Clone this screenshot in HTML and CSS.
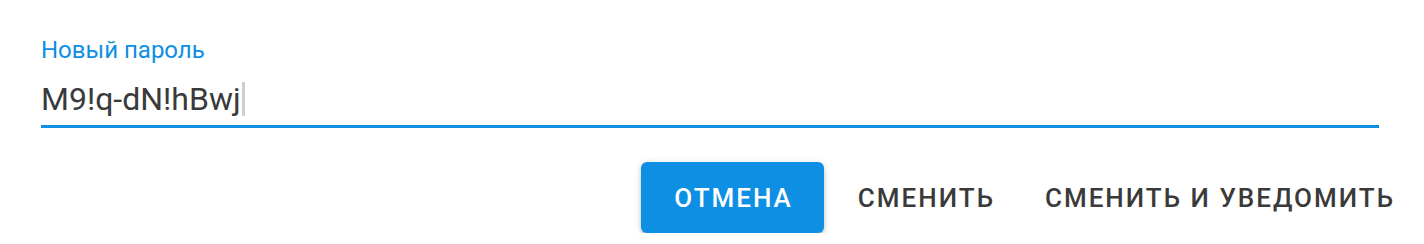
FILE: index.html
```html
<!DOCTYPE html>
<html lang="ru">
<head>
<meta charset="utf-8">
<link rel="stylesheet" href="styles.css">
</head>
<body>
<div class="dialog">
  <div class="field">
    <label class="field-label">Новый пароль</label>
    <div class="field-input"><span class="value">M9!q-dN!hBwj</span><span class="caret"></span></div>
  </div>
  <div class="actions">
    <button class="btn btn-primary">Отмена</button>
    <button class="btn btn-text">Сменить</button>
    <button class="btn btn-text">Сменить и уведомить</button>
  </div>
</div>
</body>
</html>
```
FILE: styles.css
```css
html, body {
  margin: 0;
  padding: 0;
  background: #ffffff;
}
body {
  font-family: Roboto, "Noto Sans", sans-serif;
}
.dialog {
  padding: 36px 13px 0 41px;
}
.field {
  margin-right: 32px;
}
.field-label {
  display: block;
  font-size: 24px;
  line-height: 28px;
  color: #0d8fe3;
}
.field-input {
  display: flex;
  align-items: center;
  height: 53px;
  margin-top: 8px;
  border-bottom: 3px solid #0d8fe3;
  font-size: 32px;
  color: #3a3a3a;
}
.caret {
  display: inline-block;
  width: 3px;
  height: 34px;
  background: #cfcfcf;
  margin-left: 1px;
}
.actions {
  display: flex;
  justify-content: flex-end;
  gap: 17px;
  margin-top: 34px;
}
.btn {
  font-family: Roboto, sans-serif;
  font-weight: 500;
  font-size: 26px;
  letter-spacing: 2px;
  text-transform: uppercase;
  border: none;
  background: transparent;
  height: 71px;
  padding: 0 16px 0 17px;
  color: #3a3a3a;
  border-radius: 6px;
  cursor: pointer;
}
.btn-primary {
  background: #0d8fe3;
  color: #ffffff;
  padding: 0 31px 0 33px;
  box-shadow: 0 3px 3px -2px rgba(0,0,0,0.2), 0 3px 4px 0 rgba(0,0,0,0.14), 0 1px 8px 0 rgba(0,0,0,0.12);
}
```
